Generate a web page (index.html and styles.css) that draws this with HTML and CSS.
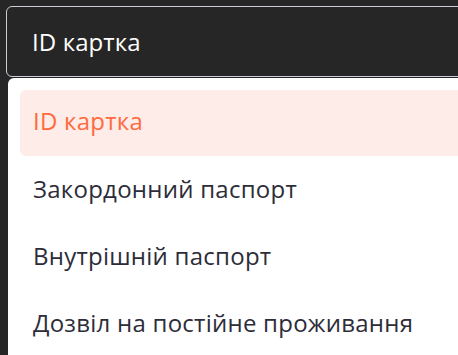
FILE: index.html
```html
<!DOCTYPE html>
<html lang="uk">
<head>
    <meta charset="UTF-8">
    <meta name="viewport" content="width=device-width, initial-scale=1.0">
    <title>Select</title>
    <link rel="stylesheet" href="styles.css">
</head>
<body>
    <div id="wrap">
        <div class="select">ID картка</div>
        <div class="dropdown">
            <div class="option active">ID картка</div>
            <div class="option">Закордонний паспорт</div>
            <div class="option">Внутрішній паспорт</div>
            <div class="option">Дозвіл на постійне проживання</div>
        </div>
    </div>
</body>
</html>
```

FILE: styles.css
```css
*{
    margin: 0;
    padding: 0;
    box-sizing: border-box;
    font-family: 'Open Sans', 'Noto Sans', sans-serif;
}
html,body{
    width: 100%;
    height: 100%;
    overflow: hidden;
}
body{
    background-color: #262626;
}
#wrap{
    padding: 6px 0 0 6px;
    width: 520px;
}
.select{
    display: flex;
    align-items: center;
    height: 71px;
    padding-left: 25px;
    border: 1px solid #c9cdd8;
    border-radius: 6px;
    color: #fff;
    font-size: 24px;
    letter-spacing: 0.1px;
}
.dropdown{
    margin: 1px 0 0 2px;
    padding: 12px;
    background-color: #fff;
    border-radius: 6px 0 0 0;
}
.option{
    display: flex;
    align-items: center;
    height: 67px;
    padding-left: 13px;
    padding-bottom: 5px;
    font-size: 24px;
    letter-spacing: 0.25px;
    color: #2d2d39;
    border-radius: 6px;
}
.option.active{
    height: 66px;
    margin-bottom: 1px;
    color: #ff6b3f;
    background-color: #fdece8;
}
```
